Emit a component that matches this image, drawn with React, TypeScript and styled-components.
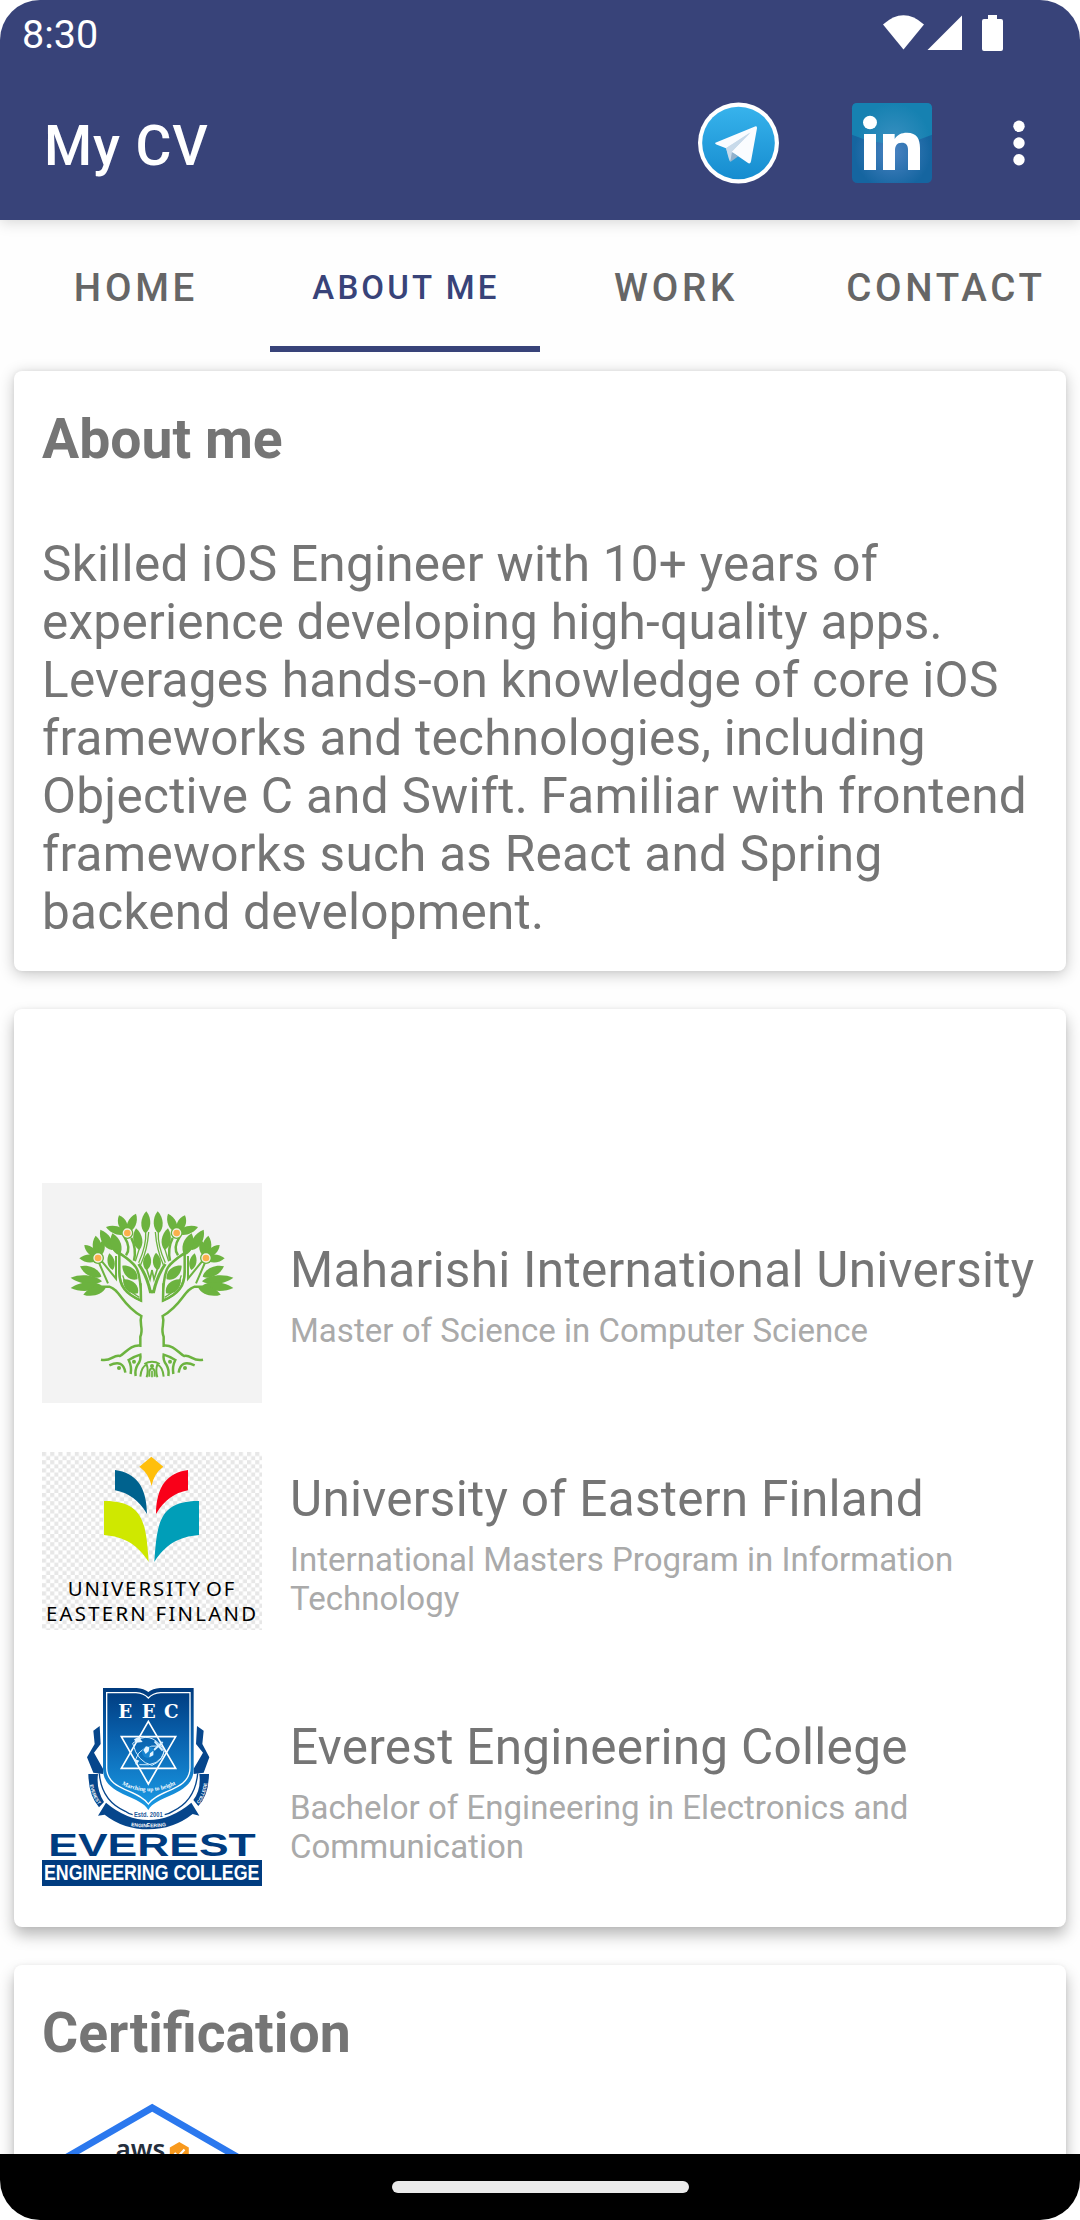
import React from "react";
import styled, { createGlobalStyle } from "styled-components";

const NAVY = "#384379";

const GlobalStyle = createGlobalStyle`
  body { margin: 0; background: #fff; font-family: Roboto, "Noto Sans", sans-serif; }
  * { box-sizing: border-box; }
  svg { display: block; overflow: visible; }
`;

const Screen = styled.div`
  width: 1080px;
  height: 2220px;
  display: flex;
  flex-direction: column;
  overflow: hidden;
  border-radius: 40px;
  background: #fefefe;
`;

const Header = styled.header`
  position: relative;
  z-index: 1;
  flex: none;
  height: 220px;
  background: ${NAVY};
  color: #fff;
  box-shadow: 0 2px 14px rgba(0, 0, 0, 0.17);
`;

const StatusBar = styled.div`
  height: 66px;
  display: flex;
  align-items: flex-start;
  justify-content: space-between;
  padding: 15px 77px 0 22px;
`;

const Clock = styled.span`
  font-size: 39.5px;
  line-height: 40px;
`;

const StatusIcons = styled.div`
  display: flex;
  height: 36px;
`;

const Toolbar = styled.div`
  height: 154px;
  display: flex;
  align-items: center;
  padding: 0 55px 0 44px;
`;

const Title = styled.h1`
  margin: 6px 0 0;
  flex: 1;
  font-size: 55px;
  font-weight: 500;
  line-height: 64px;
  letter-spacing: 0.9px;
`;

const Actions = styled.div`
  display: flex;
  align-items: center;
`;

const Action = styled.button<{ $gap: number }>`
  border: 0;
  padding: 0;
  background: none;
  margin-left: ${(p) => p.$gap}px;
`;

const Tabs = styled.nav`
  flex: none;
  height: 132px;
  display: grid;
  grid-template-columns: repeat(4, 270px);
`;

const Tab = styled.button<{ $active?: boolean }>`
  border: 0;
  border-bottom: 6px solid ${(p) => (p.$active ? NAVY : "transparent")};
  padding: 8px 0 0 2px;
  background: none;
  font-family: inherit;
  font-weight: 500;
  text-align: center;
  text-transform: uppercase;
  color: ${(p) => (p.$active ? NAVY : "#666")};
  font-size: ${(p) => (p.$active ? 33 : 38.5)}px;
  letter-spacing: ${(p) => (p.$active ? 3.15 : 3.75)}px;
`;

const Content = styled.main`
  flex: 1;
  min-height: 0;
  overflow: hidden;
  display: flex;
  flex-direction: column;
  gap: 38px;
  padding: 19px 14px 0;
`;

const Card = styled.section<{ $height: number; $depth: number }>`
  flex: none;
  height: ${(p) => p.$height}px;
  border-radius: 8px;
  background: #fff;
  padding: 0 28px;
  box-shadow: 0 ${(p) => p.$depth}px 15px rgba(0, 0, 0, ${(p) => 0.2 + p.$depth * 0.01}),
    0 0 4px rgba(0, 0, 0, 0.05);
`;

const Heading = styled.h2`
  margin: 0;
  padding-top: 37px;
  font-size: 55.3px;
  font-weight: 700;
  line-height: 64px;
  color: #757575;
`;

const Paragraph = styled.p`
  margin: 63px -10px 0 0;
  font-size: 49.5px;
  line-height: 58px;
  letter-spacing: 0.26px;
  color: #757575;
`;

const SchoolList = styled.div`
  padding-top: 174px;
`;

const School = styled.article<{ $gap: number }>`
  height: 220px;
  margin-top: ${(p) => p.$gap}px;
  display: flex;
  align-items: center;
  gap: 28px;
`;

const SchoolText = styled.div<{ $drop: number }>`
  flex: 1;
  padding-top: ${(p) => p.$drop}px;
`;

const SchoolName = styled.h3`
  margin: 0 -10px 12px 0;
  font-size: 49.5px;
  font-weight: 400;
  line-height: 58px;
  letter-spacing: 0.28px;
  color: #757575;
  white-space: nowrap;
`;

const Degree = styled.p`
  margin: 0;
  font-size: 33px;
  line-height: 39px;
  letter-spacing: 0.03px;
  color: #aaa;
`;

const Badge = styled.div`
  margin-top: 38px;
`;

const NavBar = styled.footer`
  position: relative;
  flex: none;
  height: 66px;
  background: #000;
  display: flex;
  justify-content: center;
  align-items: center;
`;

const Pill = styled.div`
  width: 297px;
  height: 12px;
  border-radius: 6px;
  background: #eaeaea;
`;

const Telegram = () => (
  <svg width="81" height="81" viewBox="54 37.500 243 243">
    <defs>
      <linearGradient id="tg" x1="0" y1="0" x2="0" y2="1">
        <stop offset="0" stopColor="#37b3ec" />
        <stop offset="1" stopColor="#168ccf" />
      </linearGradient>
    </defs>
    <circle cx="175.500" cy="157.500" r="121.500" fill="#fff" />
    <circle cx="175.500" cy="157.500" r="109" fill="url(#tg)" />
    <path d="M138 172 L228 110 L160 185 L151 214 Q147 212 138 172Z" fill="#c8daea" />
    <path d="M151 213 L156 184 L174 198 L153 213Z" fill="#93b1cb" />
    <path d="M106 157 Q104 160 109 162 L138 173 L212 126 L155 184 L203 217 Q211 222 213 212 L231 113 Q232 106 225 108Z" fill="#fafcff" />
    <path d="M138 173 L210 126 L156 183 L147 199Z" fill="#c8daea" />
  </svg>
);

const LinkedIn = () => (
  <svg width="80" height="80" viewBox="516 39 240 240">
    <defs>
      <radialGradient id="liTop" cx="640" cy="150" r="110" gradientUnits="userSpaceOnUse">
        <stop offset="0" stopColor="#388fc0" />
        <stop offset="1" stopColor="#1681b1" />
      </radialGradient>
      <radialGradient id="liBase" cx="638" cy="185" r="115" gradientUnits="userSpaceOnUse">
        <stop offset="0" stopColor="#4a83c2" />
        <stop offset="1" stopColor="#1565a0" />
      </radialGradient>
    </defs>
    <rect x="516" y="39" width="240" height="240" rx="16" fill="url(#liBase)" />
    <path d="M516 134 V55 Q516 39 532 39 H740 Q756 39 756 55 V134 Q636 186 516 134Z" fill="url(#liTop)" />
    <ellipse cx="570" cy="97.500" rx="21" ry="20" fill="#fff" />
    <path d="M552 132 H588 V240 H552Z M609 132 H644 V147 C652 134 664 128 681 128 C711 128 720 147 720 174 V240 H684 V180 C684 166 679 158 665 158 C650 158 645 168 645 182 V240 H609Z" fill="#fff" />
  </svg>
);

const Kebab = () => (
  <svg width="12" height="46" viewBox="0 0 12 46" fill="#fff">
    <circle cx="6" cy="6.300" r="5.700" />
    <circle cx="6" cy="23" r="5.700" />
    <circle cx="6" cy="39.700" r="5.700" />
  </svg>
);

const DeviceStatus = () => (
  <svg width="120" height="36" viewBox="883 15 120 36" fill="#fff">
    <path d="M883 24.500 Q903.500 6 924 24.500 L903.500 49.500Z" />
    <path d="M927.500 50 L962 15.500 V50Z" />
    <path d="M988 15 H997 V19 H1001 Q1003 19 1003 21 V49 Q1003 51 1001 51 H984 Q982 51 982 49 V21 Q982 19 984 19 H988Z" />
  </svg>
);

const leaf = (x1: number, y1: number, x2: number, y2: number, w: number) => {
  const dx = x2 - x1;
  const dy = y2 - y1;
  const n = Math.hypot(dx, dy);
  const px = (-dy / n) * w;
  const py = (dx / n) * w;
  const ax = x1 + dx * 0.2;
  const ay = y1 + dy * 0.2;
  const bx = x1 + dx * 0.7;
  const by = y1 + dy * 0.7;
  return `M${x1} ${y1} C${ax + px} ${ay + py} ${bx + px} ${by + py} ${x2} ${y2} C${bx - px} ${by - py} ${ax - px} ${ay - py} ${x1} ${y1}Z`;
};

const LEAVES: number[][] = [
  [346, 190, 349, 124, 18],
  [288, 186, 267, 136, 17],
  [294, 186, 318, 131, 17],
  [290, 190, 228, 171, 16],
  [328, 240, 318, 175, 18],
  [246, 240, 211, 179, 19],
  [268, 256, 247, 190, 20],
  [206, 258, 197, 197, 18],
  [202, 260, 163, 225, 15],
  [206, 266, 148, 265, 16],
  [210, 258, 219, 210, 13],
  [248, 300, 238, 250, 14],
  [349, 300, 354, 248, 16],
  [214, 320, 150, 289, 18],
  [216, 334, 122, 323, 17],
  [214, 346, 122, 354, 17],
  [228, 352, 160, 374, 17],
  [322, 328, 277, 287, 20],
  [324, 370, 279, 328, 21],
];

const TreeHalf = () => (
  <>
    {LEAVES.map((l) => (
      <path key={l.join()} d={leaf(l[0], l[1], l[2], l[3], l[4])} fill="#6cb33f" />
    ))}
    <g fill="none" stroke="#6cb33f" strokeWidth="7.500">
      <path d="M224 216 C262 250 300 264 318 292 C332 314 333 352 333 392 C288 372 266 350 268 300 V250" />
      <path d="M268 300 C268 344 290 376 333 392 V340" strokeWidth="5" />
      <path d="M278 316 Q290 362 328 382" strokeWidth="4" />
      <path d="M206 276 L234 340 M214 272 L258 326 V258" strokeWidth="6" />
      <path d="M284 202 Q304 234 288 256 M304 204 Q320 236 312 272" />
      <path d="M347 184 Q350 226 326 278 M356 186 Q352 240 332 284 M328 236 L316 274" strokeWidth="4" />
      <path d="M326 282 Q350 316 361 365 H368" strokeWidth="9" />
      <path d="M349 294 L360 328 L366 300" strokeWidth="5" />
      <path d="M190 350 H238 C272 360 274 404 334 438 C326 462 342 474 331 500 V527 C300 524 288 548 270 558 C250 552 244 576 213 569" />
      <path d="M238 586 Q280 566 286 608" />
      <path d="M302 612 Q306 590 296 570 Q316 558 331 554 Q334 570 322 586 Q314 600 317 618" />
      <path d="M331 620 Q334 590 350 584 Q356 600 350 622" strokeWidth="6" />
      <path d="M343 582 Q354 575 366 575 M358 620 V604 Q360 596 366 594" strokeWidth="6" />
    </g>
    <circle cx="267" cy="594" r="6" fill="#6cb33f" />
    <circle cx="312" cy="575" r="6" fill="#6cb33f" />
    {[[292, 189], [204, 264]].map(([x, y]) => (
      <g key={x}>
        <circle cx={x} cy={y} r="18" fill="#6cb33f" />
        <circle cx={x} cy={y} r="12" fill="#fbb04c" stroke="#f3f3e6" strokeWidth="4" />
      </g>
    ))}
  </>
);

const MaharishiLogo = () => (
  <svg width="220" height="220" viewBox="36 39 660 660">
    <rect x="36" y="39" width="660" height="660" fill="#f3f3f3" />
    <TreeHalf />
    <g transform="translate(732 0) scale(-1 1)">
      <TreeHalf />
    </g>
    <circle cx="366" cy="588" r="6" fill="#6cb33f" />
    <path d="M366 602 V622" stroke="#6cb33f" strokeWidth="5" />
  </svg>
);

const FinlandLogo = () => (
  <svg width="220" height="178" viewBox="36 36 660 534">
    <defs>
      <pattern id="checker" x="36" y="36" width="24.600" height="24.600" patternUnits="userSpaceOnUse">
        <rect width="24.600" height="24.600" fill="#fff" />
        <rect width="12.300" height="12.300" fill="#e7e7e7" />
        <rect x="12.300" y="12.300" width="12.300" height="12.300" fill="#e7e7e7" />
      </pattern>
    </defs>
    <rect x="36" y="36" width="660" height="534" fill="url(#checker)" />
    <path d="M364 50 L400 80 Q370 102 365 138 Q358 102 328 80Z" fill="#ffbf0b" />
    <path d="M255 90 C318 98 350 140 351 222 Q316 162 255 151Z" fill="#00628e" />
    <path d="M474 90 C411 98 379 140 378 222 Q413 162 474 151Z" fill="#f90019" />
    <path d="M222 183 C342 182 348 250 356 366 C324 314 282 290 222 285Z" fill="#cfe800" />
    <path d="M507 183 C387 182 381 250 373 366 C405 314 447 290 507 285Z" fill="#009eb8" />
    <g fontFamily='"Noto Sans", "Open Sans", sans-serif' fontSize="61" fill="#000">
      <text x="113" y="467" textLength="500" lengthAdjust="spacing" wordSpacing="-10">UNIVERSITY OF</text>
      <text x="48" y="543" textLength="630" lengthAdjust="spacing">EASTERN FINLAND</text>
    </g>
  </svg>
);

const EverestLogo = () => (
  <svg width="220" height="198" viewBox="36 54 660 594">
    <defs>
      <linearGradient id="shield" x1="0" y1="54" x2="0" y2="420" gradientUnits="userSpaceOnUse">
        <stop offset="0" stopColor="#003a7d" />
        <stop offset="0.400" stopColor="#0961ad" />
        <stop offset="1" stopColor="#1a9be6" />
      </linearGradient>
      <path id="motto" d="M276 344 Q355 384 440 342" />
      <path id="ribbonMid" d="M262 460 Q355 484 450 460" />
      <path id="ribbonLeft" d="M180 344 Q184 376 208 408" />
      <path id="ribbonRight" d="M508 402 Q528 372 532 334" />
    </defs>
    <g fill="#06468c">
      <path d="M209 168 L212 222 L192 248 L219 296 V312 L190 308 L171 262 L194 222 L190 182Z" />
      <path d="M501 168 L498 222 L519 248 L491 296 V312 L521 308 L538 262 L517 222 L521 182Z" />
      <path d="M175 312 H204 Q198 358 222 396 L207 412 Q176 376 175 312Z" />
      <path d="M537 312 H508 Q514 358 490 390 L505 408 Q536 376 537 312Z" />
      <path d="M228 398 Q290 450 355 450 Q422 450 484 398 L508 437 L488 432 Q430 478 355 478 Q280 478 224 434 L204 437Z" />
    </g>
    <path d="M208 310 Q214 392 286 424 Q296 432 308 434 M503 310 Q496 392 428 424 Q416 432 404 434" fill="none" stroke="#06468c" strokeWidth="4" />
    <path d="M219 54 H320 Q342 56 355 66 Q368 56 390 54 H491 V296 C491 378 382 372 355 420 C328 372 219 378 219 296Z" fill="url(#shield)" />
    <path d="M230 68 H318 Q342 70 355 84 Q368 70 392 68 H480 V294 C480 362 384 358 355 402 C326 358 230 362 230 294Z" fill="none" stroke="#fff" strokeWidth="4" />
    <g fontFamily='"DejaVu Serif", serif' fontWeight="700" fontSize="55" fill="#fff" textAnchor="middle">
      <text x="286" y="144">E</text>
      <text x="356" y="144">E</text>
      <text x="424" y="144">C</text>
    </g>
    <g fill="none" stroke="#fff" strokeWidth="5">
      <path d="M355 154 L437 295 H274Z" />
      <path d="M355 342 L274 200 H437Z" />
    </g>
    <g fill="none" stroke="#d4eeff" strokeWidth="3">
      <path d="M308 220 Q360 176 402 240 Q402 270 366 286 Q322 276 308 220" />
      <path d="M316 270 Q330 222 394 228 M328 284 Q390 292 404 242" />
      <path d="M374 214 L398 242 M398 216 L372 240" strokeWidth="6" />
    </g>
    <circle cx="354" cy="246" r="18" fill="#1784d0" />
    <path d="M340 240 L348 229 L358 232 L356 244 L347 252Z M360 250 L370 242 L370 256 L358 262Z M312 208 L326 200 L338 216 L318 218Z M312 266 L328 272 L318 286Z" fill="#e4f4ff" />
    <text fontFamily='"Liberation Serif", serif' fontWeight="700" fontSize="17.500" fill="#fff">
      <textPath href="#motto">Marching up to heights</textPath>
    </text>
    <g fontFamily='"Liberation Sans", sans-serif' fontWeight="700">
      <text x="312" y="440" fontSize="21" fill="#245a99" textLength="86" lengthAdjust="spacingAndGlyphs">Estd. 2001</text>
      <g fill="#fff">
        <text fontSize="15"><textPath href="#ribbonMid" startOffset="42">ENGINEERING</textPath></text>
        <text fontSize="14"><textPath href="#ribbonLeft">EVEREST</textPath></text>
        <text fontSize="14"><textPath href="#ribbonRight">COLLEGE</textPath></text>
      </g>
      <text x="55" y="557" fontSize="93" fill="#003c80" textLength="622" lengthAdjust="spacingAndGlyphs">EVEREST</text>
      <rect x="36" y="570" width="660" height="78" fill="#003c80" />
      <text x="42" y="631" fontSize="64" fill="#fff" textLength="646" lengthAdjust="spacingAndGlyphs">ENGINEERING COLLEGE</text>
    </g>
  </svg>
);

const AwsBadge = () => (
  <svg width="220" height="254" viewBox="42 2104 220 254">
    <path d="M152.200 2107.800 L258 2168.900 V2291 L152.200 2352 L46.400 2291 V2168.900Z" fill="#fff" stroke="#2b78ee" strokeWidth="6.800" />
    <text x="115.500" y="2158.500" fontFamily='"Noto Sans", "Open Sans", sans-serif' fontWeight="600" fontSize="27" fill="#252f3e" textLength="50" lengthAdjust="spacingAndGlyphs">aws</text>
    <path d="M179.300 2142 L188.800 2147.500 V2159 L179.300 2164.500 L169.800 2159 V2147.500Z" fill="#f8991d" />
    <path d="M174.500 2153 L178 2156.500 L184.500 2149.500" fill="none" stroke="#fff" strokeWidth="2.200" />
  </svg>
);

const SCHOOLS = [
  { name: "Maharishi International University", degree: "Master of Science in Computer Science", Logo: MaharishiLogo, gap: 0, drop: 5 },
  { name: "University of Eastern Finland", degree: "International Masters Program in Information Technology", Logo: FinlandLogo, gap: 28, drop: 6 },
  { name: "Everest Engineering College", degree: "Bachelor of Engineering in Electronics and Communication", Logo: EverestLogo, gap: 26, drop: 10 },
];

const TABS = ["Home", "About me", "Work", "Contact"];

export default function App() {
  return (
    <>
      <GlobalStyle />
      <Screen>
        <Header>
          <StatusBar>
            <Clock>8:30</Clock>
            <StatusIcons>
              <DeviceStatus />
            </StatusIcons>
          </StatusBar>
          <Toolbar>
            <Title>My CV</Title>
            <Actions>
              <Action $gap={0} aria-label="Telegram"><Telegram /></Action>
              <Action $gap={73} aria-label="LinkedIn"><LinkedIn /></Action>
              <Action $gap={81} aria-label="More options"><Kebab /></Action>
            </Actions>
          </Toolbar>
        </Header>
        <Tabs>
          {TABS.map((label) => (
            <Tab key={label} $active={label === "About me"}>{label}</Tab>
          ))}
        </Tabs>
        <Content>
          <Card $height={600} $depth={3}>
            <Heading>About me</Heading>
            <Paragraph>
              Skilled iOS Engineer with 10+ years of experience developing high-quality apps. Leverages
              hands-on knowledge of core iOS frameworks and technologies, including Objective C and Swift.
              Familiar with frontend frameworks such as React and Spring backend development.
            </Paragraph>
          </Card>
          <Card $height={918} $depth={8}>
            <SchoolList>
              {SCHOOLS.map(({ name, degree, Logo, gap, drop }) => (
                <School key={name} $gap={gap}>
                  <Logo />
                  <SchoolText $drop={drop}>
                    <SchoolName>{name}</SchoolName>
                    <Degree>{degree}</Degree>
                  </SchoolText>
                </School>
              ))}
            </SchoolList>
          </Card>
          <Card $height={600} $depth={9}>
            <Heading>Certification</Heading>
            <Badge>
              <AwsBadge />
            </Badge>
          </Card>
        </Content>
        <NavBar>
          <Pill />
        </NavBar>
      </Screen>
    </>
  );
}
